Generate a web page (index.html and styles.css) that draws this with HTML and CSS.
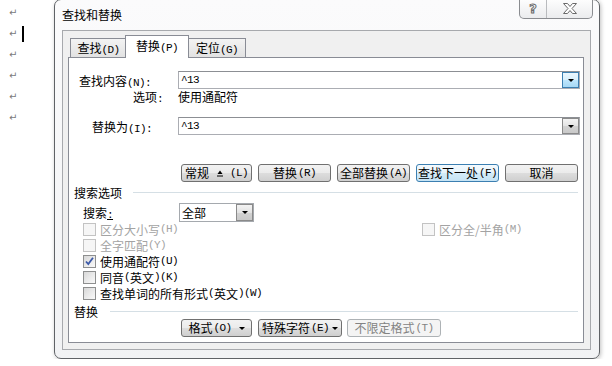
FILE: index.html
```html
<!DOCTYPE html>
<html lang="zh-CN">
<head>
  <meta charset="UTF-8" />
  <title>查找和替换</title>
  <link rel="stylesheet" href="styles.css">
</head>
<body>

<div class="page">

  <div class="doc">
    <div class="para">↵</div>
    <div class="para">↵<span class="caret"></span></div>
    <div class="para">↵</div>
    <div class="para">↵</div>
    <div class="para">↵</div>
    <div class="para">↵</div>
  </div>

  <div class="dialog">
    <div class="titlebar">
      <span class="title">查找和替换</span>
      <div class="caption">
        <span class="cap-help">?</span>
        <span class="cap-close">
          <svg width="16" height="11" viewBox="0 0 16 11">
            <path d="M1.5 0.5h4l2.5 3 2.5-3h4l-4.5 5 4.5 5h-4l-2.5-3-2.5 3h-4l4.5-5z" fill="#fff" stroke="#6a6a6a" stroke-width="1"/>
          </svg>
        </span>
      </div>
    </div>

    <div class="client">
      <div class="tabs">
        <div class="tab t-find">查找<span class="key">(D)</span></div>
        <div class="tab t-repl active">替换<span class="key">(P)</span></div>
        <div class="tab t-goto">定位<span class="key">(G)</span></div>
      </div>

      <div class="panel">
        <div class="field-row find-row">
          <span class="field-label">查找内容<span class="key">(N):</span></span>
          <div class="combo">
            <span class="combo-text">^13</span>
            <span class="drop hot"><i class="arrow"></i></span>
          </div>
        </div>
        <div class="opt-row">
          <span class="opt-label">选项<span class="key">:</span></span>
          <span>使用通配符</span>
        </div>
        <div class="field-row repl-row">
          <span class="field-label lbl-repl">替换为<span class="key">(I):</span></span>
          <div class="combo">
            <span class="combo-text">^13</span>
            <span class="drop"><i class="arrow"></i></span>
          </div>
        </div>

        <div class="btn-row">
          <button class="btn w-less">常规<svg class="less-ico" width="6" height="7" viewBox="0 0 6 7"><path d="M3 0.5L5.5 4h-5z" fill="#000"/><rect x="0" y="5.5" width="6" height="1" fill="#000"/></svg><span class="key">(L)</span></button>
          <button class="btn w-repl">替换<span class="key">(R)</span></button>
          <button class="btn w-all">全部替换<span class="key">(A)</span></button>
          <button class="btn w-next focus">查找下一处<span class="key">(F)</span></button>
          <button class="btn w-cancel">取消</button>
        </div>

        <div class="group">
          <span>搜索选项</span>
          <span class="rule r-search"></span>
        </div>

        <div class="search-row">
          <span class="search-label">搜索<u class="key">:</u></span>
          <div class="select">
            <span class="select-text">全部</span>
            <span class="drop"><i class="arrow"></i></span>
          </div>
        </div>

        <div class="check-row">
          <span class="check-item wide disabled"><i class="box"></i>区分大小写<span class="key">(H)</span></span>
          <span class="check-item disabled"><i class="box"></i>区分全/半角<span class="key">(M)</span></span>
        </div>
        <div class="check-row">
          <span class="check-item disabled"><i class="box"></i>全字匹配<span class="key">(Y)</span></span>
        </div>
        <div class="check-row">
          <span class="check-item"><i class="box checked"><svg width="11" height="11" viewBox="0 0 11 11"><path d="M2 5.5l2.3 2.6L9 1.8" fill="none" stroke="#3d5aa8" stroke-width="1.8"/></svg></i>使用通配符<span class="key">(U)</span></span>
        </div>
        <div class="check-row">
          <span class="check-item"><i class="box"></i>同音<span class="key">(</span>英文<span class="key">)(K)</span></span>
        </div>
        <div class="check-row">
          <span class="check-item"><i class="box"></i>查找单词的所有形式<span class="key">(</span>英文<span class="key">)(W)</span></span>
        </div>

        <div class="group g-repl">
          <span>替换</span>
          <span class="rule r-repl"></span>
        </div>

        <div class="btn-row bottom">
          <button class="btn w-fmt">格式<span class="key">(O)</span><i class="arrow"></i></button>
          <button class="btn w-spec">特殊字符<span class="key">(E)</span><i class="arrow"></i></button>
          <button class="btn w-nofmt" disabled>不限定格式<span class="key">(T)</span></button>
        </div>
      </div>
    </div>
  </div>

</div>

</body>
</html>
```

FILE: styles.css
```css
* {
  box-sizing: border-box;
}
body {
  margin: 0;
  background: #fff;
  font-family: "Noto Sans CJK SC", "Liberation Sans", sans-serif;
  font-size: 12px;
  color: #000;
}
.page {
  display: flex;
  align-items: flex-start;
}

/* word document behind the dialog */
.doc {
  width: 54px;
  padding: 2px 0 0 9px;
}
.para {
  height: 21px;
  display: flex;
  align-items: center;
  font-family: "DejaVu Sans", sans-serif;
  font-size: 10px;
  color: #7a7a7a;
}
.caret {
  display: inline-block;
  width: 2px;
  height: 16px;
  margin: 0 0 0 5px;
  background: #000;
}

/* dialog frame */
.dialog {
  width: 546px;
  height: 360px;
  margin-top: -1px;
  border: 1px solid #5f6266;
  border-radius: 7px;
  background: linear-gradient(#fbfbfc, #f1f2f4);
  box-shadow: 1px 1px 4px rgba(0,0,0,0.25);
  display: flex;
  flex-direction: column;
  overflow: hidden;
}
.titlebar {
  height: 30px;
  flex: none;
  display: flex;
  justify-content: space-between;
  align-items: flex-start;
  padding: 0 6px 0 7px;
}
.title {
  line-height: 30px;
}
.caption {
  display: flex;
  height: 19px;
  border: 1px solid #8a8c90;
  border-top: 0;
  border-radius: 0 0 5px 5px;
  background: linear-gradient(#fdfdfd, #ebecee);
}
.cap-help {
  width: 27px;
  border-right: 1px solid #b9bbbe;
  display: flex;
  justify-content: center;
  align-items: center;
  font-family: "DejaVu Sans", sans-serif;
  font-weight: bold;
  font-size: 13px;
  line-height: 1;
  color: #fff;
  -webkit-text-stroke: 1px #6a6a6a;
  padding-bottom: 2px;
}
.cap-close {
  width: 45px;
  display: flex;
  justify-content: center;
  align-items: center;
  padding-bottom: 2px;
}

.client {
  flex: 1;
  margin: 0 8px 8px 7px;
  border: 1px solid #a7a9ad;
  background: #f0f0f0;
  padding: 4px 6px 6px 5px;
  display: flex;
  flex-direction: column;
}

/* tabs */
.tabs {
  height: 22px;
  flex: none;
  display: flex;
  align-items: flex-end;
  padding-left: 2px;
  position: relative;
  z-index: 1;
}
.tab {
  height: 19px;
  line-height: 18px;
  text-align: center;
  border: 1px solid #898c95;
  border-bottom: 0;
  background: linear-gradient(#f3f3f3, #e2e2e2);
}
.t-find { width: 57px; }
.t-repl { width: 64px; margin-left: -2px; }
.t-goto { width: 58px; margin-left: -1px; }
.tab.active {
  height: 23px;
  margin-bottom: -1px;
  line-height: 20px;
  background: #fff;
  position: relative;
  z-index: 2;
}

.panel {
  flex: 1;
  border: 1px solid #898c95;
  background: #fff;
}

.key {
  font-family: "Liberation Mono", monospace;
  font-size: 11px;
  letter-spacing: -0.6px;
}

/* find / replace fields */
.field-row {
  display: flex;
  align-items: center;
  height: 18px;
}
.find-row { margin-top: 13px; }
.repl-row { margin-top: 13px; }
.field-label {
  width: 109px;
  padding-left: 10px;
}
.lbl-repl { padding-left: 23px; }
.combo {
  width: 402px;
  height: 18px;
  border: 1px solid #abadb3;
  border-top-color: #8c8f94;
  display: flex;
  justify-content: space-between;
  align-items: center;
}
.combo-text {
  padding-left: 2px;
  font-family: "Liberation Mono", monospace;
  font-size: 11px;
  letter-spacing: -0.6px;
}
.drop {
  width: 17px;
  height: 16px;
  border: 1px solid #8a8a8a;
  background: linear-gradient(#f3f3f3, #e3e3e3 50%, #d2d2d2 51%, #c9c9c9);
  display: flex;
  justify-content: center;
  align-items: center;
}
.drop.hot {
  border-color: #3c7fb1;
  background: linear-gradient(#eaf6fd, #d9f0fc 50%, #bee6fd 51%, #a7d9f5);
}
.arrow {
  display: inline-block;
  width: 0;
  height: 0;
  border-left: 3px solid transparent;
  border-right: 3px solid transparent;
  border-top: 3px solid #000;
}
.opt-row {
  display: flex;
  height: 15px;
  line-height: 15px;
}
.opt-label {
  width: 109px;
  padding-left: 64px;
}

/* buttons */
.btn-row {
  display: flex;
  gap: 6px;
  margin-top: 29px;
  padding-left: 112px;
}
.btn-row.bottom {
  margin-top: 0;
}
.btn {
  height: 18px;
  padding: 0;
  border: 1px solid #707070;
  border-radius: 3px;
  background: linear-gradient(#f2f2f2, #ebebeb 50%, #dddddd 51%, #cfcfcf);
  font-family: inherit;
  font-size: 12px;
  line-height: 16px;
  color: #000;
  display: flex;
  justify-content: center;
  align-items: center;
  gap: 1px;
}
.btn.focus {
  border-color: #3c7fb1;
  background: linear-gradient(#f4fafe, #e5f3fb 50%, #d3ebf8 51%, #c5e3f4);
}
.btn:disabled {
  border-color: #adb2b5;
  background: #f4f4f4;
  color: #838383;
}
.less-ico {
  margin: 0 6px 0 7px;
}
.w-less { width: 71px; }
.w-repl { width: 73px; }
.w-all { width: 73px; }
.w-next { width: 83px; }
.w-cancel { width: 73px; }
.w-fmt { width: 71px; }
.w-spec { width: 84px; }
.w-nofmt { width: 94px; margin-left: -1px; }
.w-fmt .arrow { margin-left: 6px; }
.w-spec .arrow { margin-left: 2px; }

/* group headers */
.group {
  display: flex;
  align-items: center;
  height: 16px;
  margin-top: 2px;
  padding: 0 5px 0 5px;
}
.g-repl {
  margin-top: 3px;
  height: 15px;
}
.rule {
  flex: 1;
  height: 1px;
  background: #d5dfe5;
}
.r-search { margin-left: 11px; }
.r-repl { margin-left: 12px; }

/* search select */
.search-row {
  display: flex;
  align-items: center;
  height: 18px;
  margin-top: 3px;
}
.search-label {
  width: 110px;
  padding-left: 14px;
}
.search-label u {
  text-decoration: underline;
}
.select {
  width: 75px;
  height: 19px;
  border: 1px solid #a5a9ae;
  display: flex;
  justify-content: space-between;
  align-items: center;
  padding-left: 2px;
}
.select .drop {
  height: 17px;
}

/* checkboxes */
.check-row {
  height: 16px;
  display: flex;
  align-items: center;
  padding-left: 14px;
}
.check-item {
  display: flex;
  align-items: center;
}
.check-item.wide {
  width: 339px;
}
.box {
  width: 13px;
  height: 13px;
  margin-right: 4px;
  border: 1px solid #8e8f8f;
  background: linear-gradient(135deg, #d8d8d8, #fafafa);
  display: flex;
  justify-content: center;
  align-items: center;
}
.check-item.disabled {
  color: #a3a3a3;
}
.check-item.disabled .box {
  border-color: #c3c3c3;
  background: #f6f6f6;
}
```
